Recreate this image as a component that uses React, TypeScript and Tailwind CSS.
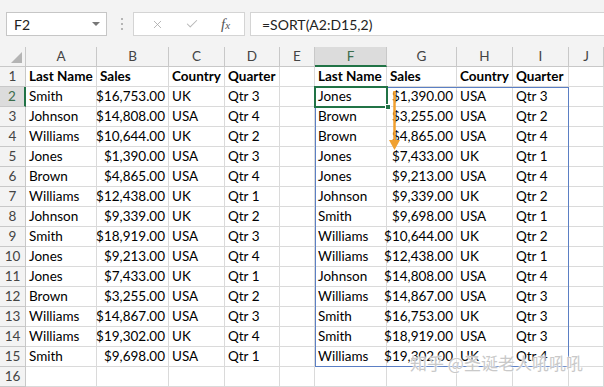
import { X, Check } from "lucide-react";

const colWidths = "grid-cols-[26px_71px_72px_56px_55px_35px_72px_70px_56px_56px_35px]";
const letters = ["A", "B", "C", "D", "E", "F", "G", "H", "I", "J"];

const left = [
  ["Smith", "$16,753.00", "UK", "Qtr 3"],
  ["Johnson", "$14,808.00", "USA", "Qtr 4"],
  ["Williams", "$10,644.00", "UK", "Qtr 2"],
  ["Jones", "$1,390.00", "USA", "Qtr 3"],
  ["Brown", "$4,865.00", "USA", "Qtr 4"],
  ["Williams", "$12,438.00", "UK", "Qtr 1"],
  ["Johnson", "$9,339.00", "UK", "Qtr 2"],
  ["Smith", "$18,919.00", "USA", "Qtr 3"],
  ["Jones", "$9,213.00", "USA", "Qtr 4"],
  ["Jones", "$7,433.00", "UK", "Qtr 1"],
  ["Brown", "$3,255.00", "USA", "Qtr 2"],
  ["Williams", "$14,867.00", "USA", "Qtr 3"],
  ["Williams", "$19,302.00", "UK", "Qtr 4"],
  ["Smith", "$9,698.00", "USA", "Qtr 1"],
];

const sorted = [
  ["Jones", "$1,390.00", "USA", "Qtr 3"],
  ["Brown", "$3,255.00", "USA", "Qtr 2"],
  ["Brown", "$4,865.00", "USA", "Qtr 4"],
  ["Jones", "$7,433.00", "UK", "Qtr 1"],
  ["Jones", "$9,213.00", "USA", "Qtr 4"],
  ["Johnson", "$9,339.00", "UK", "Qtr 2"],
  ["Smith", "$9,698.00", "USA", "Qtr 1"],
  ["Williams", "$10,644.00", "UK", "Qtr 2"],
  ["Williams", "$12,438.00", "UK", "Qtr 1"],
  ["Johnson", "$14,808.00", "USA", "Qtr 4"],
  ["Williams", "$14,867.00", "USA", "Qtr 3"],
  ["Smith", "$16,753.00", "UK", "Qtr 3"],
  ["Smith", "$18,919.00", "USA", "Qtr 3"],
  ["Williams", "$19,302.00", "UK", "Qtr 4"],
];

const header = ["Last Name", "Sales", "Country", "Quarter"];

const buildRows = () => {
  const rows: string[][] = [];
  rows.push([...header, "", ...header, ""]);
  for (let i = 0; i < 14; i++) rows.push([...left[i], "", ...sorted[i], ""]);
  rows.push(["", "", "", "", "", "", "", "", "", ""]);
  return rows;
};

const App = () => {
  const rows = buildRows();
  return (
    <div className="relative h-[387px] w-[604px] overflow-hidden bg-white font-['Lato','Liberation_Sans',sans-serif] text-[13.5px] text-black">
      {/* formula bar */}
      <div className="flex h-[47px] items-start bg-[#f3f3f3] pt-[12px]">
        <div className="ml-[6px] flex h-[24px] w-[101px] items-center justify-between border border-[#c6c6c6] bg-white pl-[7px] pr-[6px] text-[14px] text-[#222]">
          <span>F2</span>
          <span className="h-0 w-0 border-x-[4px] border-t-[4px] border-x-transparent border-t-[#777]" />
        </div>
        <div className="ml-[14px] flex h-[24px] flex-col justify-center gap-[3px]">
          <span className="h-[2px] w-[2px] bg-[#b5b5b5]" />
          <span className="h-[2px] w-[2px] bg-[#b5b5b5]" />
          <span className="h-[2px] w-[2px] bg-[#b5b5b5]" />
        </div>
        <div className="ml-[10px] flex h-[24px] w-[112px] items-center border border-[#d4d4d4] bg-white">
          <X className="ml-[17px] h-[13px] w-[13px] text-[#a8a8a8]" strokeWidth={1.5} />
          <Check className="ml-[21px] h-[14px] w-[14px] text-[#b8b8b8]" strokeWidth={1.8} />
          <span className="ml-[22px] font-['Liberation_Serif',serif] text-[15px] italic text-[#555]">
            f<span className="text-[11px]">x</span>
          </span>
        </div>
        <div className="ml-[5px] flex h-[24px] flex-1 items-center border-y border-l border-[#d4d4d4] bg-white pl-[11px] text-[14px] text-[#222]">
          =SORT(A2:D15,2)
        </div>
      </div>

      {/* sheet */}
      <div className={`grid ${colWidths} auto-rows-[20px]`}>
        <div className="relative border-b border-r border-[#c8c8c8] bg-[#f3f3f3]">
          <span className="absolute bottom-[3px] right-[3px] h-0 w-0 border-b-[11px] border-l-[11px] border-b-[#b4b4b4] border-l-transparent" />
        </div>
        {letters.map((l) =>
          l === "F" ? (
            <div
              key={l}
              className="flex items-center justify-center border-b-[2px] border-r border-b-[#217346] border-r-[#c8c8c8] bg-[#dcdcdc] text-[#3c6e4d]"
            >
              {l}
            </div>
          ) : (
            <div
              key={l}
              className="flex items-center justify-center border-b border-r border-[#c8c8c8] bg-[#f3f3f3] text-[#444]"
            >
              {l}
            </div>
          )
        )}
        {rows.map((row, r) => (
          <div key={r} className="contents">
            <div
              className={
                r === 1
                  ? "flex items-center justify-center border-b border-r-[2px] border-b-[#c8c8c8] border-r-[#217346] bg-[#dcdcdc] text-[#3c6e4d]"
                  : "flex items-center justify-center border-b border-r border-[#c8c8c8] bg-[#f3f3f3] text-[#444]"
              }
            >
              {r + 1}
            </div>
            {row.map((cell, c) => (
              <div
                key={c}
                className={`flex items-center overflow-visible whitespace-nowrap border-b border-r border-[#dadada] px-[3px] ${
                  (c === 1 || c === 6) && r > 0 ? "justify-end" : "justify-start"
                } ${r === 0 ? "font-bold" : ""}`}
              >
                {cell}
              </div>
            ))}
          </div>
        ))}
      </div>

      {/* spill range */}
      <div className="pointer-events-none absolute left-[315px] top-[87px] h-[280px] w-[254px] border border-[#5b7fc4]" />
      {/* active cell */}
      <div className="pointer-events-none absolute left-[314px] top-[86px] h-[22px] w-[74px] border-[2px] border-[#217346]" />
      <div className="pointer-events-none absolute left-[385px] top-[104px] h-[6px] w-[6px] border border-white bg-[#217346]" />
      {/* orange arrow */}
      <svg className="pointer-events-none absolute left-[388px] top-[90px]" width="14" height="62" viewBox="0 0 14 62">
        <line x1="6.5" y1="1" x2="6.5" y2="52" stroke="#f0a030" strokeWidth="2.5" />
        <polygon points="1,50 12,50 6.5,60" fill="#f0a030" />
      </svg>
      {/* watermark */}
      <div className="pointer-events-none absolute left-[410px] top-[350px] whitespace-nowrap font-['Noto_Sans_CJK_SC',sans-serif] text-[17px] text-[#c9c9c9] [text-shadow:0_0_2px_#fff,0_0_2px_#fff]">
        知乎 @圣诞老人吼吼吼
      </div>
    </div>
  );
};

export default App;
